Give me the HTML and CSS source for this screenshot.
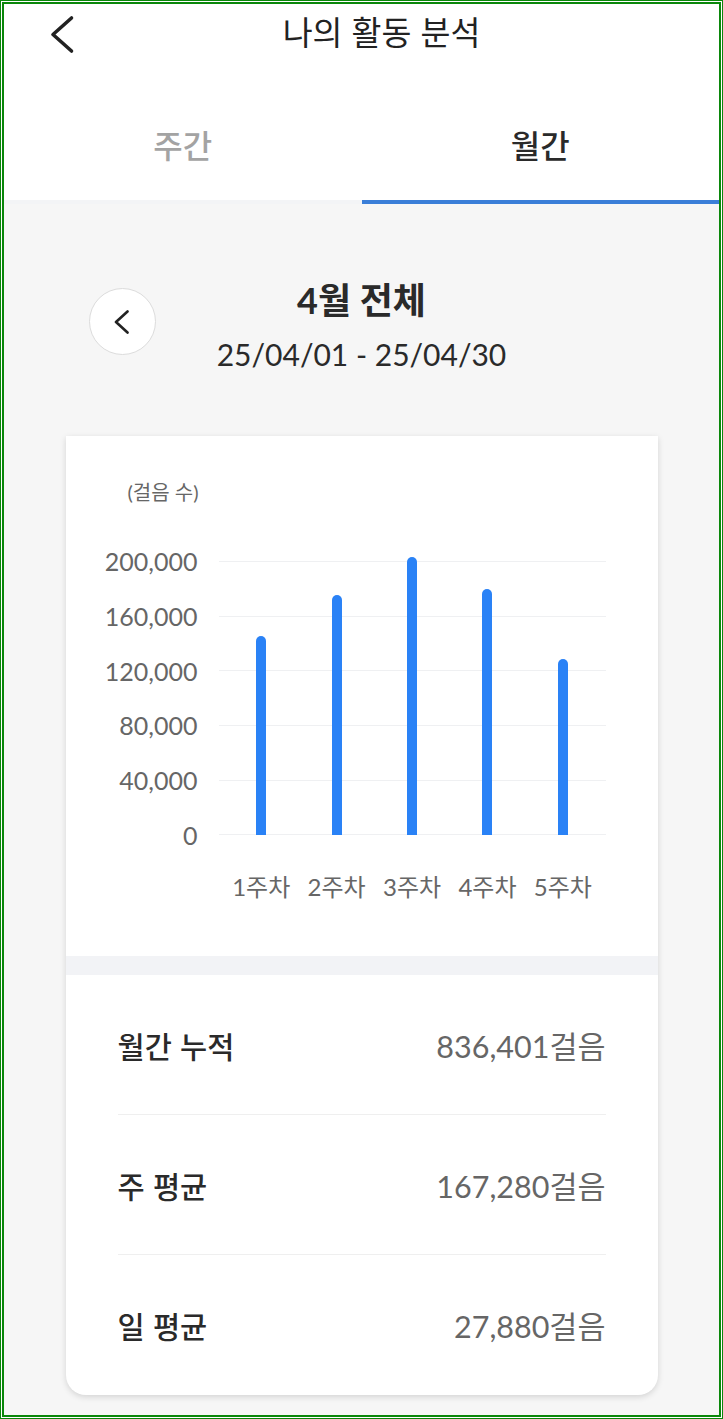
FILE: index.html
```html
<!DOCTYPE html>
<html lang="ko">
<head>
  <meta charset="UTF-8">
  <title>나의 활동 분석</title>
  <link rel="stylesheet" href="styles.css">
</head>
<body>
  <div class="frame">
    <div class="screen">

      <header class="topbar">
        <button class="back" aria-label="뒤로">
          <svg width="32" height="40" viewBox="0 0 32 40"><path d="M25.5 4 L7 20.5 L25.5 37" /></svg>
        </button>
        <h1 class="title">나의 활동 분석</h1>
        <span></span>
      </header>

      <nav class="tabs">
        <div class="tab">주간</div>
        <div class="tab active">월간</div>
      </nav>

      <main class="content">
        <!-- 기간 선택 -->
        <div class="period">
          <button class="prev" aria-label="이전">
            <svg width="24" height="24" viewBox="0 0 24 24"><path d="M16.5 1.5 L5 12 L16.5 22.5" /></svg>
          </button>
          <div class="period-text">
            <div class="period-title">4월 전체</div>
            <div class="period-range">25/04/01 - 25/04/30</div>
          </div>
          <span></span>
        </div>

        <section class="card">
          <div class="chart">
            <div class="unit">(걸음 수)</div>
            <div class="chart-body">
              <div class="y-axis">
                <div class="tick"><span>200,000</span></div>
                <div class="tick"><span>160,000</span></div>
                <div class="tick"><span>120,000</span></div>
                <div class="tick"><span>80,000</span></div>
                <div class="tick"><span>40,000</span></div>
                <div class="tick"><span>0</span></div>
              </div>
              <div class="plot">
                <div class="bars">
                  <div class="col"><div class="bar" style="height: 199px"></div></div>
                  <div class="col"><div class="bar" style="height: 240px"></div></div>
                  <div class="col"><div class="bar" style="height: 278px"></div></div>
                  <div class="col"><div class="bar" style="height: 246px"></div></div>
                  <div class="col"><div class="bar" style="height: 176px"></div></div>
                </div>
              </div>
              <div class="x-axis">
                <span>1주차</span>
                <span>2주차</span>
                <span>3주차</span>
                <span>4주차</span>
                <span>5주차</span>
              </div>
            </div>
          </div>

          <div class="band"></div>

          <div class="stat">
            <span class="stat-label">월간 누적</span>
            <span class="stat-value">836,401걸음</span>
          </div>
          <div class="stat">
            <span class="stat-label">주 평균</span>
            <span class="stat-value">167,280걸음</span>
          </div>
          <div class="stat">
            <span class="stat-label">일 평균</span>
            <span class="stat-value">27,880걸음</span>
          </div>
        </section>
      </main>

    </div>
  </div>
</body>
</html>
```

FILE: styles.css
```css
html, body {
  margin: 0;
  padding: 0;
}
body {
  font-family: Lato, "Noto Sans CJK KR", sans-serif;
  color: #222;
}
/* 바깥 초록 테두리 */
.frame {
  box-sizing: border-box;
  width: 723px;
  height: 1419px;
  border: 1px solid #0b870b;
  padding: 1px;
  background: #fff;
}
.screen {
  box-sizing: border-box;
  height: 100%;
  border: 2px solid #0b870b;
  background: #f6f6f6;
  display: flex;
  flex-direction: column;
}
button {
  border: none;
  background: none;
  padding: 0;
  cursor: pointer;
}

/* 상단바 */
.topbar {
  height: 60px;
  background: #fff;
  display: grid;
  grid-template-columns: 1fr auto 1fr;
  align-items: center;
}
.back {
  justify-self: start;
  margin-left: 42px;
  display: flex;
}
.back path {
  fill: none;
  stroke: #222;
  stroke-width: 3.6;
  stroke-linecap: round;
  stroke-linejoin: round;
}
.title {
  margin: 0 0 0 40px;
  padding-bottom: 6px;
  font-family: "Noto Sans CJK KR", sans-serif;
  font-size: 32.5px;
  font-weight: 400;
  line-height: 40px;
  color: #222;
}

/* 탭 */
.tabs {
  display: flex;
  background: #fff;
}
.tab {
  flex: 1;
  text-align: center;
  font-family: "Noto Sans CJK KR", sans-serif;
  font-size: 32px;
  font-weight: 500;
  line-height: 40px;
  padding: 60px 0 36px;
  color: #a3a3a3;
  border-bottom: 4px solid #f3f4f6;
}
.tab.active {
  color: #2a2a2a;
  border-bottom-color: #3a7ed8;
}

/* 기간 */
.period {
  display: grid;
  grid-template-columns: 1fr auto 1fr;
  padding-top: 76px;
}
.prev {
  justify-self: start;
  align-self: start;
  margin: 8px 0 0 85px;
  width: 67px;
  height: 67px;
  box-sizing: border-box;
  border-radius: 50%;
  border: 1.5px solid #dcdcdc;
  background: #fff;
  display: flex;
  align-items: center;
  justify-content: center;
}
.prev path {
  fill: none;
  stroke: #222;
  stroke-width: 2.6;
  stroke-linecap: round;
  stroke-linejoin: round;
}
.period-text {
  text-align: center;
}
.period-title {
  font-size: 36px;
  font-weight: 700;
  line-height: 40px;
  color: #2a2a2a;
}
.period-range {
  margin-top: 16px;
  font-size: 30px;
  line-height: 36px;
  color: #2a2a2a;
}

/* 카드 */
.card {
  width: 592px;
  margin: 64px auto 0;
  background: #fff;
  border-radius: 0 0 20px 20px;
  box-shadow: 0 2px 6px rgba(0, 0, 0, 0.14);
}
.chart {
  padding: 44px 52px 55px 0;
}
.unit {
  margin-left: 62px;
  font-size: 20px;
  line-height: 24px;
  color: #666;
}
.chart-body {
  margin-top: 57px;
  display: grid;
  grid-template-columns: 132px 387px;
  grid-template-rows: 274px auto;
  column-gap: 21px;
  row-gap: 38px;
}
.y-axis {
  display: flex;
  flex-direction: column;
  justify-content: space-between;
}
.tick {
  height: 0;
  display: flex;
  align-items: center;
  justify-content: flex-end;
  font-size: 25px;
  line-height: 28px;
  color: #666;
}
.plot {
  background: repeating-linear-gradient(to bottom, #eff0f2 0, #eff0f2 1px, transparent 1px, transparent 54.65px);
}
.bars {
  height: 100%;
  display: flex;
  align-items: flex-end;
  padding: 0 5px;
}
.col {
  flex: 1;
  display: flex;
  justify-content: center;
}
.bar {
  width: 10px;
  border-radius: 5px 5px 0 0;
  background: #2a82f6;
}
.x-axis {
  grid-column: 2;
  display: flex;
  padding: 0 5px;
  font-size: 24px;
  line-height: 28px;
  color: #666;
}
.x-axis span {
  flex: 1;
  text-align: center;
}
.band {
  height: 19px;
  background: #f2f3f6;
}

/* 통계 */
.stat {
  height: 139px;
  margin: 0 52px;
  display: flex;
  justify-content: space-between;
  align-items: center;
  border-bottom: 1px solid #efefef;
}
.stat:last-child {
  height: 140px;
  border-bottom: none;
}
.stat-label {
  font-family: "Noto Sans CJK KR", sans-serif;
  font-size: 29.5px;
  font-weight: 500;
  color: #2a2a2a;
}
.stat-value {
  font-size: 30.5px;
  color: #666;
}
```
